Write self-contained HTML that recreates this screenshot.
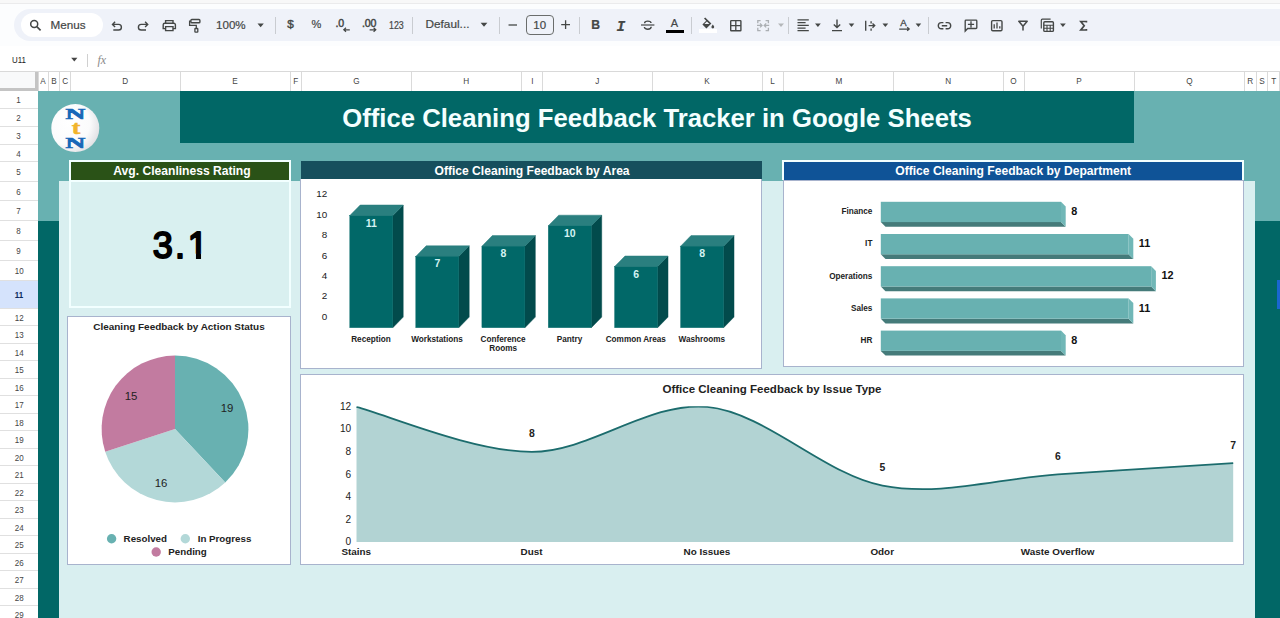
<!DOCTYPE html>
<html lang="en"><head><meta charset="utf-8"><title>Office Cleaning Feedback Tracker in Google Sheets</title>
<style>
html,body{margin:0;padding:0}
body{width:1280px;height:618px;overflow:hidden;position:relative;background:#fff;font-family:"Liberation Sans",Arial,sans-serif;color:#222}
div,span,svg{position:absolute;box-sizing:border-box}
svg text{font-family:"Liberation Sans",Arial,sans-serif}
.tb{color:#444746;font-size:11.7px;line-height:14px;white-space:nowrap;-webkit-text-stroke:0.2px #444746}
.sep{width:1px;background:#c9ccd1;top:17px;height:17px}
.colh{top:71.5px;height:19.5px;background:#fff;border-left:1px solid #dadada;font-size:9.1px;line-height:19.4px;text-align:center;color:#444;padding-left:1px}
.colh b{display:inline-block;font-weight:normal;transform:scaleX(.9)}
.rowh{left:0;width:37.5px;background:#fff;border-bottom:1px solid #e0e0e0;font-size:9.3px;text-align:center;color:#444}
.rowh b{display:inline-block;font-weight:normal;transform:scaleX(.86)}
.hdr{color:#fff;font-weight:bold;font-size:12.1px;text-align:center;white-space:nowrap}
.box{background:#fff;border:1px solid #a8b3cd}
.ct{font-weight:bold;white-space:nowrap;text-align:center}
</style></head><body>

<div id="topstrip" style="left:0;top:0;width:1280px;height:3px;background:#f8f8f8"></div>
<div style="left:0;top:3px;width:1280px;height:1px;background:#ebebec"></div>
<div id="chrome" style="left:0;top:4px;width:1280px;height:67px;background:#fcfdfe"></div>
<div id="toolbar" style="left:14px;top:9px;width:1290px;height:32px;border-radius:16px;background:#eff2f9"></div>
<div id="search" style="left:21px;top:13px;width:82px;height:24px;border-radius:12px;background:#fff"></div>
<span class="tb" style="left:50.5px;top:17.5px">Menus</span>
<span class="tb" style="left:216px;top:17.5px;font-size:11.6px">100%</span>
<span class="tb" style="left:287.3px;top:16.5px;font-size:11.8px;-webkit-text-stroke:0.4px #444746">$</span>
<span class="tb" style="left:311.5px;top:16.5px;font-size:11px">%</span>
<span class="tb" style="left:335.5px;top:15.8px;font-size:10.6px;-webkit-text-stroke:0.45px #444746;letter-spacing:-0.2px">.0</span>
<span class="tb" style="left:362px;top:15.8px;font-size:10.6px;-webkit-text-stroke:0.45px #444746;letter-spacing:-0.2px">.00</span>
<span class="tb" style="left:388.6px;top:18.5px;font-size:10.2px;transform:scaleX(.87);transform-origin:0 0">123</span>
<span class="tb" style="left:425.5px;top:17px;font-size:11.8px">Defaul...</span>
<div style="left:525.5px;top:15px;width:28.5px;height:20px;border:1px solid #6a6d6c;border-radius:4px"></div>
<span class="tb" style="left:533.3px;top:17.5px;font-size:11.5px">10</span>
<span class="tb" style="left:591.3px;top:17.5px;font-size:12.2px;font-weight:bold">B</span>
<span class="tb" style="left:616.6px;top:20.3px;font-size:14.6px;font-style:italic;font-weight:bold;font-family:'Liberation Mono',monospace">I</span>
<span class="tb" style="left:670.7px;top:16px;font-size:11px">A</span>
<div style="left:665.6px;top:30px;width:18.4px;height:2.8px;background:#000"></div>
<div style="left:698.7px;top:29.4px;width:18.8px;height:3.2px;background:#fff"></div>
<span class="tb" style="left:900.3px;top:16.1px;font-size:9.6px;-webkit-text-stroke:0.3px #444746">A</span>
<div class="sep" style="left:274.5px"></div>
<div class="sep" style="left:412.0px"></div>
<div class="sep" style="left:498.9px"></div>
<div class="sep" style="left:578.9px"></div>
<div class="sep" style="left:690.5px"></div>
<div class="sep" style="left:788.2px"></div>
<div class="sep" style="left:928.0px"></div>
<svg id="icons" style="left:0;top:0" width="1280" height="50" viewBox="0 0 1280 50"><circle cx="34.2" cy="23.9" r="3.5" stroke="#444746" fill="none" stroke-width="1.5"/><path d="M36.8 26.6 L40.6 30.4" stroke="#444746" fill="none" stroke-width="1.6"/><path d="M115.1 21.8 L112.5 24.4 L115.1 27 M112.8 24.4 H118.6 A2.8 2.8 0 0 1 118.6 30 H113.3" stroke="#444746" fill="none" stroke-width="1.4"/><path d="M145.1 21.8 L147.7 24.4 L145.1 27 M147.4 24.4 H141.2 A2.8 2.8 0 0 0 141.2 30 H146" stroke="#444746" fill="none" stroke-width="1.4"/><path d="M165.6 23.2 V20.6 H173 V23.2 M165.6 28.6 H163.2 V24.8 A1.6 1.6 0 0 1 164.8 23.2 H173.8 A1.6 1.6 0 0 1 175.4 24.8 V28.6 H173 M165.6 26.6 H173 V30.6 H165.6 Z" stroke="#444746" fill="none" stroke-width="1.4"/><rect x="190.9" y="19.5" width="9" height="3.3" rx="0.9" stroke="#444746" fill="none" stroke-width="1.4"/><path d="M190.9 21.1 H189.6 V25.4 H196.3 V28.4" stroke="#444746" fill="none" stroke-width="1.3"/><rect x="194.9" y="28.5" width="2.9" height="3.7" rx="0.5" stroke="#444746" fill="none" stroke-width="1.3"/><path d="M257.5 23.424999999999997 L263.8 23.424999999999997 L260.65 27.175 Z" fill="#444746"/><path d="M349.8 29.8 H344 M346 27.8 L343.8 29.8 L346 31.8" stroke="#444746" fill="none" stroke-width="1.2"/><path d="M369.6 29.8 H375.6 M373.6 27.8 L375.8 29.8 L373.6 31.8" stroke="#444746" fill="none" stroke-width="1.2"/><path d="M480.6 22.700000000000014 L487.4 22.700000000000014 L484.0 26.69999999999999 Z" fill="#444746"/><path d="M508.6 25 H517" stroke="#444746" fill="none" stroke-width="1.3"/><path d="M561.2 24.6 H570 M565.6 20.2 V29" stroke="#444746" fill="none" stroke-width="1.3"/><path d="M641 25 H654.4" stroke="#444746" fill="none" stroke-width="1.2"/><path d="M651 23 C651 20.6 644.6 20.4 644.6 23.2 M644.4 27 C644.4 30 651.2 30 651.2 26.8" stroke="#444746" fill="none" stroke-width="1.4"/><path d="M705.2 17.4 L704 18.5 L706.2 20.7 L702.4 24.5 L706.4 28.5 L711.4 23.5 Z M704.4 24 L706.9 21.5 L709.5 24 Z" fill="#444746" fill-rule="evenodd"/><path d="M712.8 24.6 C712.8 24.6 711.4 26.2 711.4 27.1 A1.4 1.4 0 0 0 714.2 27.1 C714.2 26.2 712.8 24.6 712.8 24.6 Z" fill="#444746"/><rect x="730.7" y="20.6" width="10.2" height="10.2" rx="0.6" stroke="#444746" fill="none" stroke-width="1.4"/><path d="M735.8 20.6 V30.8 M730.7 25.7 H740.9" stroke="#444746" fill="none" stroke-width="1.3"/><path d="M760.6 20.6 H757.8 V23.2 M757.8 27.8 V30.6 H760.6 M765.6 20.6 H768.4 V23.2 M768.4 27.8 V30.6 H765.6 M757 25.4 H761.8 M760 23.4 L762 25.4 L760 27.4 M769.2 25.4 H764.4 M766.2 23.4 L764.2 25.4 L766.2 27.4" stroke="#abafb3" fill="none" stroke-width="1.3"/><path d="M778 23.5 L784 23.5 L781.0 27.099999999999998 Z" fill="#b4b7ba"/><path d="M797.5 19.9 H808.8 M797.5 22.6 H805.6 M797.5 25.3 H808.8 M797.5 28 H805.6 M797.5 30.6 H808.8" stroke="#444746" fill="none" stroke-width="1.25"/><path d="M815 23.55000000000001 L820.8 23.55000000000001 L817.9 27.049999999999986 Z" fill="#444746"/><path d="M837 19.6 V27.4 M833.8 24.4 L837 27.6 L840.2 24.4 M832 30.6 H842" stroke="#444746" fill="none" stroke-width="1.4"/><path d="M848.7 23.600000000000023 L854.3 23.600000000000023 L851.5 26.999999999999975 Z" fill="#444746"/><path d="M865.7 20.8 V30.8 M868.6 25.6 H874.4 M872.5 23.5 L874.7 25.6 L872.5 27.7 M871.1 21.2 V23.6 M871.1 28.4 V30.8" stroke="#444746" fill="none" stroke-width="1.35"/><path d="M882.5 23.57499999999999 L888.2 23.57499999999999 L885.35 27.02500000000001 Z" fill="#444746"/><path d="M899.2 29 H908.8 M907.2 27.2 L909.2 29 L907.2 30.8" stroke="#444746" fill="none" stroke-width="1.25"/><path d="M915.6 23.599999999999994 L921.2 23.599999999999994 L918.4000000000001 27.000000000000004 Z" fill="#444746"/><path d="M943.4 22.6 H941.4 A3.1 3.1 0 0 0 941.4 28.8 H943.4 M945.6 22.6 H947.6 A3.1 3.1 0 0 1 947.6 28.8 H945.6 M941.8 25.7 H947.2" stroke="#444746" fill="none" stroke-width="1.4"/><path d="M965.2 31 V20.9 A0.8 0.8 0 0 1 966 20.1 H976 A0.8 0.8 0 0 1 976.8 20.9 V27.7 A0.8 0.8 0 0 1 976 28.5 H967.7 Z M967.9 24.3 H974.1 M971 21.3 V27.4" stroke="#444746" fill="none" stroke-width="1.35"/><rect x="991.6" y="20.6" width="10.4" height="10.2" rx="1.2" stroke="#444746" fill="none" stroke-width="1.4"/><path d="M994.2 28.6 V24.2 M997 28.6 V22.6 M999.8 28.6 V26.2" stroke="#444746" fill="none" stroke-width="1.3"/><path d="M1018.8 21.3 H1027.2 L1023 26.2 Z M1023 26 V30" stroke="#444746" fill="none" stroke-width="1.5" stroke-linejoin="round" stroke-linecap="round"/><path d="M1041.3 28.6 V20.2 A1 1 0 0 1 1042.3 19.2 H1050.6" stroke="#444746" fill="none" stroke-width="1.2"/><rect x="1043.8" y="21.8" width="9.6" height="9.6" rx="1" stroke="#444746" fill="none" stroke-width="1.4"/><path d="M1043.8 25.2 H1053.4 M1043.8 28.3 H1053.4 M1047 25.2 V31.4 M1050.2 25.2 V31.4" stroke="#444746" fill="none" stroke-width="1.1"/><path d="M1060 23.55000000000001 L1065.8 23.55000000000001 L1062.9 27.049999999999986 Z" fill="#444746"/><path d="M1086.4 22.5 V21.5 H1080.8 L1084.2 25.8 L1080.8 30 H1086.4 V29" stroke="#444746" fill="none" stroke-width="1.7"/></svg>
<div id="formulabar" style="left:0;top:46px;width:1280px;height:25px;background:#fff"></div>
<span style="left:11.8px;top:52.7px;font-size:9.9px;line-height:14px;color:#222;transform:scaleX(.8);transform-origin:0 0">U11</span>
<svg style="left:0;top:46px" width="120" height="25" viewBox="0 46 120 25"><path d="M71.2 57.849999999999994 L77.4 57.849999999999994 L74.30000000000001 61.550000000000004 Z" fill="#444"/></svg>
<div style="left:87px;top:54px;width:1px;height:13px;background:#d0d0d0"></div>
<span style="left:97.5px;top:52px;font-size:12px;line-height:16px;color:#8a8a8a;font-style:italic;font-family:'Liberation Serif',serif;letter-spacing:0px">fx</span>
<div style="left:0;top:71px;width:1280px;height:1px;background:#d9d9d9"></div>
<div id="corner" style="left:0;top:72px;width:38px;height:19px;background:#f8f9fa;border-right:3px solid #c4c4c4;border-bottom:3px solid #c4c4c4"></div>
<div class="colh" style="left:37.5px;width:10px"><b>A</b></div>
<div class="colh" style="left:47.5px;width:11px"><b>B</b></div>
<div class="colh" style="left:58.5px;width:11px"><b>C</b></div>
<div class="colh" style="left:69.5px;width:110px"><b>D</b></div>
<div class="colh" style="left:179.5px;width:110px"><b>E</b></div>
<div class="colh" style="left:289.5px;width:11px"><b>F</b></div>
<div class="colh" style="left:300.5px;width:110px"><b>G</b></div>
<div class="colh" style="left:410.5px;width:110px"><b>H</b></div>
<div class="colh" style="left:520.5px;width:21px"><b>I</b></div>
<div class="colh" style="left:541.5px;width:110px"><b>J</b></div>
<div class="colh" style="left:651.5px;width:110px"><b>K</b></div>
<div class="colh" style="left:761.5px;width:21px"><b>L</b></div>
<div class="colh" style="left:782.5px;width:110px"><b>M</b></div>
<div class="colh" style="left:892.5px;width:110px"><b>N</b></div>
<div class="colh" style="left:1002.5px;width:21px"><b>O</b></div>
<div class="colh" style="left:1023.5px;width:110px"><b>P</b></div>
<div class="colh" style="left:1133.5px;width:110px"><b>Q</b></div>
<div class="colh" style="left:1243.5px;width:12px"><b>R</b></div>
<div class="colh" style="left:1255.5px;width:11px"><b>S</b></div>
<div class="colh" style="left:1266.5px;width:12px"><b>T</b></div>
<div class="colh" style="left:1278.5px;width:3px"></div>
<div class="rowh" style="top:91px;height:18.2px;line-height:19.2px;"><b>1</b></div>
<div class="rowh" style="top:109.2px;height:17.7px;line-height:18.7px;"><b>2</b></div>
<div class="rowh" style="top:126.9px;height:17.7px;line-height:18.7px;"><b>3</b></div>
<div class="rowh" style="top:144.6px;height:17.7px;line-height:18.7px;"><b>4</b></div>
<div class="rowh" style="top:162.3px;height:19.3px;line-height:20.3px;"><b>5</b></div>
<div class="rowh" style="top:181.6px;height:19.4px;line-height:20.4px;"><b>6</b></div>
<div class="rowh" style="top:201px;height:20.0px;line-height:21.0px;"><b>7</b></div>
<div class="rowh" style="top:221px;height:20.0px;line-height:21.0px;"><b>8</b></div>
<div class="rowh" style="top:241px;height:19.8px;line-height:20.8px;"><b>9</b></div>
<div class="rowh" style="top:260.8px;height:20.0px;line-height:21.0px;"><b>10</b></div>
<div class="rowh" style="top:280.8px;height:28.0px;line-height:29.0px;background:#d5e3fc;font-weight:bold;color:#0b2a5c;"><b style="font-weight:bold">11</b></div>
<div class="rowh" style="top:308.8px;height:17.5px;line-height:18.5px;"><b>12</b></div>
<div class="rowh" style="top:326.3px;height:17.5px;line-height:18.5px;"><b>13</b></div>
<div class="rowh" style="top:343.8px;height:17.5px;line-height:18.5px;"><b>14</b></div>
<div class="rowh" style="top:361.3px;height:17.5px;line-height:18.5px;"><b>15</b></div>
<div class="rowh" style="top:378.8px;height:17.5px;line-height:18.5px;"><b>16</b></div>
<div class="rowh" style="top:396.3px;height:17.5px;line-height:18.5px;"><b>17</b></div>
<div class="rowh" style="top:413.8px;height:17.5px;line-height:18.5px;"><b>18</b></div>
<div class="rowh" style="top:431.3px;height:17.5px;line-height:18.5px;"><b>19</b></div>
<div class="rowh" style="top:448.8px;height:17.5px;line-height:18.5px;"><b>20</b></div>
<div class="rowh" style="top:466.3px;height:17.5px;line-height:18.5px;"><b>21</b></div>
<div class="rowh" style="top:483.8px;height:17.5px;line-height:18.5px;"><b>22</b></div>
<div class="rowh" style="top:501.3px;height:17.5px;line-height:18.5px;"><b>23</b></div>
<div class="rowh" style="top:518.8px;height:17.5px;line-height:18.5px;"><b>24</b></div>
<div class="rowh" style="top:536.3px;height:17.5px;line-height:18.5px;"><b>25</b></div>
<div class="rowh" style="top:553.8px;height:17.5px;line-height:18.5px;"><b>26</b></div>
<div class="rowh" style="top:571.3px;height:17.5px;line-height:18.5px;"><b>27</b></div>
<div class="rowh" style="top:588.8px;height:17.5px;line-height:18.5px;"><b>28</b></div>
<div class="rowh" style="top:606.3px;height:17.5px;line-height:18.5px;"><b>29</b></div>
<div style="left:37.5px;top:91px;width:1px;height:527px;background:#d5d5d5"></div>
<div id="sheet" style="left:38px;top:91px;width:1242px;height:527px;background:#016766"></div>
<div id="band" style="left:38px;top:91px;width:1242px;height:130px;background:#68b1b1"></div>
<div id="panel" style="left:59px;top:180.6px;width:1196px;height:438px;background:#d9eff0"></div>
<div id="titlebar" style="left:180px;top:91px;width:954px;height:52.2px;background:#016766"></div>
<div id="title" style="left:180px;top:103px;width:954px;height:30px;line-height:30px;text-align:center;color:#f4ffff;font-weight:bold;font-size:25.7px;white-space:nowrap">Office Cleaning Feedback Tracker in Google Sheets</div>
<div style="left:1277px;top:280px;width:3px;height:29px;background:#1a66d0"></div>
<svg id="logo" style="left:50px;top:102px" width="52" height="52" viewBox="50 102 52 52">
<defs><radialGradient id="lg" cx="0.35" cy="0.4" r="0.75"><stop offset="0" stop-color="#ffffff"/><stop offset="0.6" stop-color="#fbfbfc"/><stop offset="1" stop-color="#d9d9dd"/></radialGradient></defs>
<circle cx="75.3" cy="128.1" r="24" fill="url(#lg)"/>
<g text-anchor="middle" stroke-linejoin="miter">
<text transform="translate(75.4 119.1) scale(1.8 1)" style="font-family:'Liberation Serif',serif;font-size:15.2px;font-weight:bold" fill="#1767b8" stroke="#1767b8" stroke-width="0.7">N</text>
<text transform="translate(76 133.8) scale(1.35 1)" style="font-family:'Liberation Serif',serif;font-size:19px;font-weight:bold" fill="#f1b42b" stroke="#f1b42b" stroke-width="0.5">t</text>
<text transform="translate(75.4 147.6) scale(1.8 1)" style="font-family:'Liberation Serif',serif;font-size:15.2px;font-weight:bold" fill="#1767b8" stroke="#1767b8" stroke-width="0.7">N</text>
</g></svg>
<div id="kpi" style="left:69.3px;top:160.3px;width:222px;height:148px;border:2px solid #f2ffff;background:#d9f0f0"></div>
<div id="kpihdr" class="hdr" style="left:71.3px;top:162.3px;width:218px;height:18.4px;line-height:18.8px;padding-left:3.4px;background:#2a5217">Avg. Cleanliness Rating</div>
<div style="left:71.3px;top:180.4px;width:218px;height:1.6px;background:#f2ffff"></div>
<svg id="kpival" style="left:71px;top:222px" width="218" height="50" viewBox="71 222 218 50"><text x="152.68 175.05 187.85" y="257.75" font-size="36" fill="#000" stroke="#000" stroke-width="1.9" stroke-linejoin="round">3.1</text><rect x="188" y="253.7" width="7.95" height="7" fill="#d9f0f0"/><rect x="201.03" y="253.7" width="8" height="7" fill="#d9f0f0"/></svg>
<div id="piebox" class="box" style="left:67px;top:316.4px;width:224px;height:248.2px"></div>
<div class="ct" style="left:67px;top:320.5px;width:224px;font-size:9.95px;line-height:12px">Cleaning Feedback by Action Status</div>
<svg id="pie" style="left:67px;top:340px" width="224" height="224" viewBox="67 340 224 224"><path d="M175 429 L175.00 355.60 A73.4 73.4 0 0 1 225.25 482.51 Z" fill="#68b1b1"/><path d="M175 429 L225.25 482.51 A73.4 73.4 0 0 1 105.19 451.68 Z" fill="#b3d8d8"/><path d="M175 429 L105.19 451.68 A73.4 73.4 0 0 1 175.00 355.60 Z" fill="#c27ba0"/><g font-size="11.4" fill="#222" text-anchor="middle"><text x="227" y="412">19</text><text x="161" y="486.6">16</text><text x="131" y="400">15</text></g><circle cx="111.6" cy="538.8" r="4.7" fill="#68b1b1"/><circle cx="185.3" cy="538.8" r="4.7" fill="#b3d8d8"/><circle cx="156.2" cy="552" r="4.7" fill="#c27ba0"/><g font-size="9.75" font-weight="bold" fill="#222"><text x="123.6" y="541.7">Resolved</text><text x="197.7" y="541.7">In Progress</text><text x="168.3" y="555">Pending</text></g></svg>
<div id="areahdr" class="hdr" style="left:300.6px;top:161px;width:461.4px;height:18px;line-height:21.4px;padding-left:1.5px;background:#164f5d">Office Cleaning Feedback by Area</div>
<div id="areabox" class="box" style="left:300.2px;top:179px;width:461.8px;height:190.2px;border-top:none"></div>
<svg id="areachart" style="left:301px;top:180px" width="460" height="188" viewBox="301 180 460 188"><text x="327.2" y="319.7" text-anchor="end" font-size="9.9" fill="#222">0</text><text x="327.2" y="299.3" text-anchor="end" font-size="9.9" fill="#222">2</text><text x="327.2" y="278.9" text-anchor="end" font-size="9.9" fill="#222">4</text><text x="327.2" y="258.5" text-anchor="end" font-size="9.9" fill="#222">6</text><text x="327.2" y="238.1" text-anchor="end" font-size="9.9" fill="#222">8</text><text x="327.2" y="217.7" text-anchor="end" font-size="9.9" fill="#222">10</text><text x="327.2" y="197.3" text-anchor="end" font-size="9.9" fill="#222">12</text><path d="M392.8 215.6 l10.4 -10.6 V317.1 L392.8 327.7 Z" fill="#024b4c" stroke="#024b4c" stroke-width="0.5"/><path d="M349.8 215.6 l10.4 -10.6 h43.0 l-10.4 10.6 Z" fill="#2a7f7f" stroke="#2a7f7f" stroke-width="0.5"/><rect x="349.8" y="215.6" width="43.0" height="112.1" fill="#016868" stroke="#016868" stroke-width="0.4"/><text x="371.3" y="226.5" text-anchor="middle" font-size="10.5" font-weight="bold" fill="#d4f3f3">11</text><text x="371.0" y="342.4" text-anchor="middle" font-size="8.2" font-weight="bold" fill="#222">Reception</text><path d="M458.8 256.4 l10.4 -10.6 V317.1 L458.8 327.7 Z" fill="#024b4c" stroke="#024b4c" stroke-width="0.5"/><path d="M415.8 256.4 l10.4 -10.6 h43.0 l-10.4 10.6 Z" fill="#2a7f7f" stroke="#2a7f7f" stroke-width="0.5"/><rect x="415.8" y="256.4" width="43.0" height="71.3" fill="#016868" stroke="#016868" stroke-width="0.4"/><text x="437.3" y="267.3" text-anchor="middle" font-size="10.5" font-weight="bold" fill="#d4f3f3">7</text><text x="437.0" y="342.4" text-anchor="middle" font-size="8.2" font-weight="bold" fill="#222">Workstations</text><path d="M524.9 246.2 l10.4 -10.6 V317.1 L524.9 327.7 Z" fill="#024b4c" stroke="#024b4c" stroke-width="0.5"/><path d="M481.9 246.2 l10.4 -10.6 h43.0 l-10.4 10.6 Z" fill="#2a7f7f" stroke="#2a7f7f" stroke-width="0.5"/><rect x="481.9" y="246.2" width="43.0" height="81.5" fill="#016868" stroke="#016868" stroke-width="0.4"/><text x="503.4" y="257.1" text-anchor="middle" font-size="10.5" font-weight="bold" fill="#d4f3f3">8</text><text x="503.1" y="342.4" text-anchor="middle" font-size="8.2" font-weight="bold" fill="#222">Conference</text><text x="503.1" y="350.8" text-anchor="middle" font-size="8.2" font-weight="bold" fill="#222">Rooms</text><path d="M591.3 225.8 l10.4 -10.6 V317.1 L591.3 327.7 Z" fill="#024b4c" stroke="#024b4c" stroke-width="0.5"/><path d="M548.3 225.8 l10.4 -10.6 h43.0 l-10.4 10.6 Z" fill="#2a7f7f" stroke="#2a7f7f" stroke-width="0.5"/><rect x="548.3" y="225.8" width="43.0" height="101.9" fill="#016868" stroke="#016868" stroke-width="0.4"/><text x="569.8" y="236.7" text-anchor="middle" font-size="10.5" font-weight="bold" fill="#d4f3f3">10</text><text x="569.5" y="342.4" text-anchor="middle" font-size="8.2" font-weight="bold" fill="#222">Pantry</text><path d="M657.6 266.6 l10.4 -10.6 V317.1 L657.6 327.7 Z" fill="#024b4c" stroke="#024b4c" stroke-width="0.5"/><path d="M614.6 266.6 l10.4 -10.6 h43.0 l-10.4 10.6 Z" fill="#2a7f7f" stroke="#2a7f7f" stroke-width="0.5"/><rect x="614.6" y="266.6" width="43.0" height="61.1" fill="#016868" stroke="#016868" stroke-width="0.4"/><text x="636.1" y="277.5" text-anchor="middle" font-size="10.5" font-weight="bold" fill="#d4f3f3">6</text><text x="635.8" y="342.4" text-anchor="middle" font-size="8.2" font-weight="bold" fill="#222">Common Areas</text><path d="M723.6 246.2 l10.4 -10.6 V317.1 L723.6 327.7 Z" fill="#024b4c" stroke="#024b4c" stroke-width="0.5"/><path d="M680.6 246.2 l10.4 -10.6 h43.0 l-10.4 10.6 Z" fill="#2a7f7f" stroke="#2a7f7f" stroke-width="0.5"/><rect x="680.6" y="246.2" width="43.0" height="81.5" fill="#016868" stroke="#016868" stroke-width="0.4"/><text x="702.1" y="257.1" text-anchor="middle" font-size="10.5" font-weight="bold" fill="#d4f3f3">8</text><text x="701.8" y="342.4" text-anchor="middle" font-size="8.2" font-weight="bold" fill="#222">Washrooms</text></svg>
<div id="depthdr" class="hdr" style="left:782px;top:160px;width:462.4px;height:20px;line-height:18.6px;background:#0f5397;border:2px solid #f2ffff;border-bottom:none">Office Cleaning Feedback by Department</div>
<div id="deptbox" class="box" style="left:783px;top:180px;width:461.4px;height:187.4px"></div>
<svg id="deptchart" style="left:783.4px;top:182px" width="460" height="184" viewBox="783.4 182 460 184"><path d="M881.2 222.10000000000002 l4.7 4.7 H1066.1 l-4.7 -4.7 Z" fill="#457b7a"/><path d="M1061.4 201.8 l4.7 4.7 V226.8 l-4.7 -4.7 Z" fill="#71b7b7"/><rect x="881.2" y="201.8" width="180.2" height="20.3" fill="#68b1b1"/><text x="872.8" y="214.1" text-anchor="end" font-size="8.2" font-weight="bold" fill="#222">Finance</text><text x="1071.6" y="215.0" font-size="10.8" font-weight="bold" fill="#111">8</text><path d="M881.2 254.3 l4.7 4.7 H1133.7 l-4.7 -4.7 Z" fill="#457b7a"/><path d="M1129.0 234 l4.7 4.7 V259.0 l-4.7 -4.7 Z" fill="#71b7b7"/><rect x="881.2" y="234" width="247.8" height="20.3" fill="#68b1b1"/><text x="872.8" y="246.3" text-anchor="end" font-size="8.2" font-weight="bold" fill="#222">IT</text><text x="1139.2" y="247.2" font-size="10.8" font-weight="bold" fill="#111">11</text><path d="M881.2 286.5 l4.7 4.7 H1156.3 l-4.7 -4.7 Z" fill="#457b7a"/><path d="M1151.6 266.2 l4.7 4.7 V291.2 l-4.7 -4.7 Z" fill="#71b7b7"/><rect x="881.2" y="266.2" width="270.4" height="20.3" fill="#68b1b1"/><text x="872.8" y="278.5" text-anchor="end" font-size="8.2" font-weight="bold" fill="#222">Operations</text><text x="1161.8" y="279.4" font-size="10.8" font-weight="bold" fill="#111">12</text><path d="M881.2 318.7 l4.7 4.7 H1133.7 l-4.7 -4.7 Z" fill="#457b7a"/><path d="M1129.0 298.4 l4.7 4.7 V323.4 l-4.7 -4.7 Z" fill="#71b7b7"/><rect x="881.2" y="298.4" width="247.8" height="20.3" fill="#68b1b1"/><text x="872.8" y="310.7" text-anchor="end" font-size="8.2" font-weight="bold" fill="#222">Sales</text><text x="1139.2" y="311.6" font-size="10.8" font-weight="bold" fill="#111">11</text><path d="M881.2 350.90000000000003 l4.7 4.7 H1066.1 l-4.7 -4.7 Z" fill="#457b7a"/><path d="M1061.4 330.6 l4.7 4.7 V355.6 l-4.7 -4.7 Z" fill="#71b7b7"/><rect x="881.2" y="330.6" width="180.2" height="20.3" fill="#68b1b1"/><text x="872.8" y="342.9" text-anchor="end" font-size="8.2" font-weight="bold" fill="#222">HR</text><text x="1071.6" y="343.8" font-size="10.8" font-weight="bold" fill="#111">8</text></svg>
<div id="issuebox" class="box" style="left:300.2px;top:374px;width:943.8px;height:190.6px"></div>
<div class="ct" style="left:300px;top:381.9px;width:944px;font-size:11.5px;line-height:14px">Office Cleaning Feedback by Issue Type</div>
<svg id="issuechart" style="left:301.2px;top:398px" width="942" height="165" viewBox="301.2 398 942 165"><text x="351.4" y="545.3" text-anchor="end" font-size="10.1" fill="#222">0</text><text x="351.4" y="522.7" text-anchor="end" font-size="10.1" fill="#222">2</text><text x="351.4" y="500.1" text-anchor="end" font-size="10.1" fill="#222">4</text><text x="351.4" y="477.6" text-anchor="end" font-size="10.1" fill="#222">6</text><text x="351.4" y="455.0" text-anchor="end" font-size="10.1" fill="#222">8</text><text x="351.4" y="432.4" text-anchor="end" font-size="10.1" fill="#222">10</text><text x="351.4" y="409.8" text-anchor="end" font-size="10.1" fill="#222">12</text><clipPath id="cl"><rect x="350" y="406.2" width="890" height="140"/></clipPath><g clip-path="url(#cl)"><path d="M356.7 406.9 C385.9 414.4 473.6 451.9 532.0 451.9 C590.5 451.9 648.9 401.3 707.4 406.9 C765.8 412.5 824.3 474.4 882.7 485.6 C941.2 496.9 999.6 478.1 1058.1 474.4 C1116.5 470.6 1204.2 465.0 1233.4 463.1 L1233.4 541.9 L356.7 541.9 Z" fill="#b2d3d3"/><path d="M356.7 406.9 C385.9 414.4 473.6 451.9 532.0 451.9 C590.5 451.9 648.9 401.3 707.4 406.9 C765.8 412.5 824.3 474.4 882.7 485.6 C941.2 496.9 999.6 478.1 1058.1 474.4 C1116.5 470.6 1204.2 465.0 1233.4 463.1" fill="none" stroke="#1c6c6d" stroke-width="1.8"/></g><text x="356.4" y="554.8" text-anchor="middle" font-size="9.9" font-weight="bold" fill="#222">Stains</text><text x="531.7" y="554.8" text-anchor="middle" font-size="9.9" font-weight="bold" fill="#222">Dust</text><text x="707.1" y="554.8" text-anchor="middle" font-size="9.9" font-weight="bold" fill="#222">No Issues</text><text x="882.4" y="554.8" text-anchor="middle" font-size="9.9" font-weight="bold" fill="#222">Odor</text><text x="1057.8" y="554.8" text-anchor="middle" font-size="9.9" font-weight="bold" fill="#222">Waste Overflow</text><text x="532.0" y="437.3" text-anchor="middle" font-size="10.4" font-weight="bold" fill="#222">8</text><text x="882.7" y="471.0" text-anchor="middle" font-size="10.4" font-weight="bold" fill="#222">5</text><text x="1058.1" y="459.8" text-anchor="middle" font-size="10.4" font-weight="bold" fill="#222">6</text><text x="1233.4" y="448.5" text-anchor="middle" font-size="10.4" font-weight="bold" fill="#222">7</text></svg>
</body></html>
